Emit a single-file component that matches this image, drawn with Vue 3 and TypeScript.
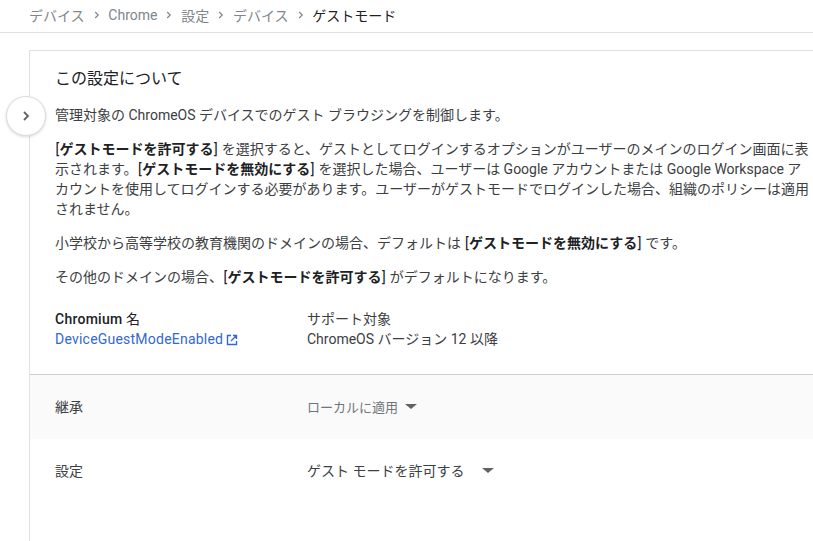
<script setup lang="ts">
const crumbs: string[] = ['デバイス', 'Chrome', '設定', 'デバイス']
</script>

<template>
  <div class="page">
    <nav class="crumbs">
      <template v-for="c in crumbs" :key="c">
        <span class="crumb">{{ c }}</span>
        <svg class="sep" width="6" height="8" viewBox="0 0 6 8"><path d="M1.2 1 L4.2 4 L1.2 7" fill="none" stroke="#80868b" stroke-width="1.2"/></svg>
      </template>
      <span class="current">ゲストモード</span>
    </nav>
    <main class="panel">
      <button class="toggle" aria-label="展開">
        <svg width="8" height="10" viewBox="0 0 8 10"><path d="M2 1 L6 5 L2 9" fill="none" stroke="#5f6368" stroke-width="1.8"/></svg>
      </button>
      <section class="about">
        <h2>この設定について</h2>
        <p>管理対象の ChromeOS デバイスでのゲスト ブラウジングを制御します。</p>
        <p><span class="br">[</span><b>ゲストモードを許可する</b><span class="br">]</span> を選択すると、ゲストとしてログインするオプションがユーザーのメインのログイン画面に表示されます。<span class="br">[</span><b>ゲストモードを無効にする</b><span class="br">]</span> を選択した場合、ユーザーは Google アカウントまたは Google Workspace アカウントを使用してログインする必要があります。ユーザーがゲストモードでログインした場合、組織のポリシーは適用されません。</p>
        <p>小学校から高等学校の教育機関のドメインの場合、デフォルトは <span class="br">[</span><b>ゲストモードを無効にする</b><span class="br">]</span> です。</p>
        <p>その他のドメインの場合、<span class="br">[</span><b>ゲストモードを許可する</b><span class="br">]</span> がデフォルトになります。</p>
        <div class="meta">
          <div class="meta-name">
            <div class="strong">Chromium <span class="plain">名</span></div>
            <a class="link">DeviceGuestModeEnabled<svg class="ext" width="12" height="12" viewBox="0 0 12 12"><path d="M5 1.5H1.5v9h9V7M7 1.5h3.5V5M10.5 1.5L5 7" fill="none" stroke="#3367d6" stroke-width="1.4"/></svg></a>
          </div>
          <div>
            <div>サポート対象</div>
            <div>ChromeOS バージョン 12 以降</div>
          </div>
        </div>
      </section>
      <div class="row inherit">
        <span class="label">継承</span>
        <span class="value muted">ローカルに適用<i class="caret first"></i></span>
      </div>
      <div class="row">
        <span class="label">設定</span>
        <span class="value">ゲスト モードを許可する<i class="caret second"></i></span>
      </div>
    </main>
  </div>
</template>

<style>
html, body { margin: 0; background: #fff; overflow: hidden; }
</style>

<style scoped>
.page {
  width: 813px;
  height: 541px;
  overflow: hidden;
  font-family: Roboto, "Noto Sans CJK JP", sans-serif;
  font-size: 14px;
  color: #3c4043;
}
.crumbs {
  height: 33px;
  box-sizing: border-box;
  border-bottom: 1px solid #e0e0e0;
  padding: 0 0 3px 29px;
  display: flex;
  align-items: center;
  color: #80868b;
}
.sep { margin: 0 8.75px 0 9px; }
.current { color: #202124; }
.panel {
  position: relative;
  margin: 17px 0 0 29px;
  width: 830px;
  height: 500px;
  box-sizing: border-box;
  border: 1px solid #e0e0e0;
  border-right: 0;
  border-bottom: 0;
}
.toggle {
  position: absolute;
  left: -24px;
  top: 45px;
  width: 40px;
  height: 40px;
  padding: 0;
  border: 1px solid #dadce0;
  border-radius: 50%;
  background: #fff;
  box-shadow: 0 1px 3px rgba(60, 64, 67, .2);
  display: flex;
  align-items: center;
  justify-content: center;
}
.about {
  padding: 17px 48px 25px 25px;
  width: 757px;
  border-bottom: 1px solid #cfcfcf;
}
h2 {
  margin: 0 0 15px;
  font-size: 16px;
  font-weight: 400;
  line-height: 22px;
  color: #202124;
}
p {
  margin: 0 0 14px;
  line-height: 20px;
}
b { font-weight: 700; color: #202124; }
.br { color: #202124; padding: 0 .45px; }
.meta {
  display: flex;
  line-height: 20px;
  margin-top: 22px;
}
.meta-name { width: 252px; }
.strong { font-weight: 500; color: #202124; letter-spacing: .25px; }
.plain { font-weight: 400; }
.link { color: #3367d6; display: inline-flex; align-items: center; letter-spacing: .22px; }
.ext { margin: 2px 0 0 3px; }
.row {
  display: flex;
  align-items: center;
  box-sizing: border-box;
  height: 64px;
  padding: 0 0 2px 25px;
}
.inherit { background: #fafafa; }
.label { width: 252px; }
.value { display: flex; align-items: center; }
.muted { color: #70757a; font-size: 13px; }
.caret {
  width: 0;
  height: 0;
  margin-top: 1px;
  border-left: 6px solid transparent;
  border-right: 6px solid transparent;
  border-top: 5px solid #5f6368;
}
.first { margin-left: 7px; }
.second { margin-left: 18px; }
</style>
